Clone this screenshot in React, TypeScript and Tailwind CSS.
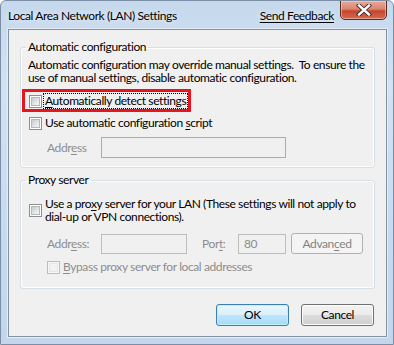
import React from "react";

const font = { fontFamily: "Lato, 'Liberation Sans', sans-serif" };

function Check({ disabled = false }: { disabled?: boolean }) {
  return (
    <div
      className={
        "w-[13px] h-[13px] shrink-0 border p-[1px] " +
        (disabled ? "border-[#bcbcbc] bg-[#f7f7f7]" : "border-[#8e8f8f] bg-white")
      }
    >
      <div
        className={
          "w-full h-full border " +
          (disabled
            ? "border-[#e6e6e6] bg-[#f2f2f2]"
            : "border-[#b4b8bd] bg-[linear-gradient(135deg,#c6cace_0%,#e4e6e8_60%,#f6f6f6_100%)]")
        }
      />
    </div>
  );
}

function U({ children }: { children: React.ReactNode }) {
  return <span className="underline underline-offset-[2px]">{children}</span>;
}

export default function App() {
  return (
    <div
      className="w-[394px] h-[345px] flex flex-col text-[12px] tracking-[-0.4px] text-black bg-[linear-gradient(180deg,#c5d8ec_0%,#d3e2f2_25%,#c9dbee_60%,#c3d6eb_100%)] border border-[#7b8ea5] rounded-t-[6px] overflow-hidden"
      style={font}
    >
      {/* Title bar */}
      <div className="h-[28px] flex items-start shrink-0">
        <div className="pl-[7px] pt-[7px] leading-[15px] [text-shadow:0_0_6px_#ffffff]">
          Local Area Network (LAN) Settings
        </div>
        <div className="flex-1" />
        <div className="pt-[7px] leading-[15px] underline underline-offset-[2px] [text-shadow:0_0_6px_#ffffff]">
          Send Feedback
        </div>
        <div className="ml-[6px] mr-[6px] -mt-[1px] w-[47px] h-[20px] rounded-b-[5px] border border-[#5b2a22] bg-[linear-gradient(180deg,#e9a99a_0%,#d98572_45%,#c6452d_55%,#d46a4f_100%)] shadow-[inset_0_0_0_1px_rgba(255,220,210,0.5)] flex items-center justify-center">
          <svg width="16" height="12" viewBox="0 0 16 12">
            <path
              d="M3 1.5 L13 10.5 M13 1.5 L3 10.5"
              stroke="#3a2a28"
              strokeWidth="4.2"
              strokeLinecap="square"
            />
            <path
              d="M3 1.5 L13 10.5 M13 1.5 L3 10.5"
              stroke="#ffffff"
              strokeWidth="2.4"
              strokeLinecap="square"
            />
          </svg>
        </div>
      </div>

      {/* Client area */}
      <div className="flex-1 ml-[7px] mr-[6px] mb-[7px] border border-[#83929f] bg-[#f0f0f0] flex flex-col px-[11px] shadow-[0_0_0_1px_#e4edf7]">
        {/* Automatic configuration */}
        <fieldset className="min-w-0 mt-[10px] border border-[#d5dfe5] rounded-[3px] shadow-[inset_0_0_0_1px_#ffffff] pb-[9px]">
          <legend className="ml-[5px] px-[2px] leading-[14px]">Automatic configuration</legend>
          <div className="mt-[4px] ml-[7px] leading-[13px] whitespace-pre">
            {"Automatic configuration may override manual settings.  To ensure the\nuse of manual settings, disable automatic configuration."}
          </div>
          <div className="relative mt-[7px] ml-[8px] h-[20px] flex items-center">
            <Check />
            <div className="ml-[1px] px-[1px] border border-dotted border-black leading-[14px]">
              <U>A</U>utomatically detect settings
            </div>
            <div className="absolute -left-[7px] -top-[2px] w-[169px] h-[23px] border-[3px] border-[#e8141e] pointer-events-none" />
          </div>
          <div className="mt-[2px] ml-[8px] h-[20px] flex items-center">
            <Check />
            <div className="ml-[3px] leading-[14px]">
              Use automatic configuration <U>s</U>cript
            </div>
          </div>
          <div className="mt-[4px] ml-[26px] h-[21px] flex items-center">
            <div className="w-[54px] text-[#8d8d8d]">
              Addr<U>e</U>ss
            </div>
            <div className="w-[185px] h-[21px] border border-[#acacac] bg-[#f0f0f0]" />
          </div>
        </fieldset>

        {/* Proxy server */}
        <fieldset className="min-w-0 mt-[5px] border border-[#d5dfe5] rounded-[3px] shadow-[inset_0_0_0_1px_#ffffff] pb-[11px]">
          <legend className="ml-[5px] px-[2px] leading-[14px]">Proxy server</legend>
          <div className="mt-[10px] ml-[8px] flex items-center">
            <Check />
            <div className="ml-[3px] leading-[13px] whitespace-pre">
              Use a pro<U>x</U>y server for your LAN (These settings will not apply to
              {"\n"}dial-up or VPN connections).
            </div>
          </div>
          <div className="mt-[10px] ml-[26px] h-[21px] flex items-center text-[#8d8d8d]">
            <div className="w-[54px]">
              Addr<U>e</U>ss:
            </div>
            <div className="w-[86px] h-[20px] border border-[#bdbdbd] bg-[#f0f0f0]" />
            <div className="ml-[15px] w-[36px]">
              Por<U>t</U>:
            </div>
            <div className="w-[48px] h-[20px] border border-[#bdbdbd] bg-[#f0f0f0] pl-[5px] leading-[18px]">
              80
            </div>
            <div className="ml-[5px] w-[72px] h-[21px] rounded-[3px] border border-[#adb2b5] bg-[#f4f4f4] flex items-center justify-center text-[#838383]">
              Advan<U>c</U>ed
            </div>
          </div>
          <div className="mt-[3px] ml-[26px] h-[20px] flex items-center text-[#8d8d8d]">
            <Check disabled />
            <div className="ml-[3px] leading-[14px]">
              <U>B</U>ypass proxy server for local addresses
            </div>
          </div>
        </fieldset>

        {/* Buttons */}
        <div className="mt-[15px] flex justify-end pr-[1px] gap-[12px]">
          <div className="w-[73px] h-[22px] rounded-[3px] border border-[#3c7fb1] bg-[linear-gradient(180deg,#eaf6fd_0%,#d9f0fc_50%,#bee6fd_50%,#a7d9f5_100%)] shadow-[inset_0_0_0_1px_#bff0ff] flex items-center justify-center">
            OK
          </div>
          <div className="w-[73px] h-[22px] rounded-[3px] border border-[#707070] bg-[linear-gradient(180deg,#f2f2f2_0%,#ebebeb_50%,#dddddd_50%,#cfcfcf_100%)] shadow-[inset_0_0_0_1px_#fcfcfc] flex items-center justify-center">
            Cancel
          </div>
        </div>
      </div>
    </div>
  );
}
